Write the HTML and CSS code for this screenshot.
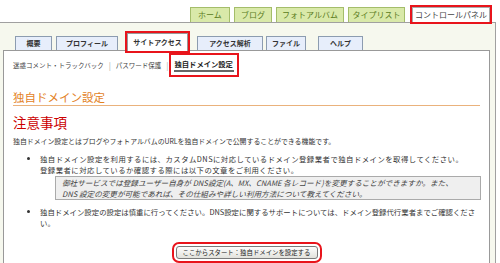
FILE: index.html
```html
<!DOCTYPE html>
<html lang="ja">
<head>
    <meta charset="UTF-8">
    <title>独自ドメイン設定</title>
    <link rel="stylesheet" href="styles.css">
</head>
<body>

<div class="frame">
    <ul class="gnav">
        <li class="gtab g-home">ホーム</li>
        <li class="gtab g-blog">ブログ</li>
        <li class="gtab g-photo">フォトアルバム</li>
        <li class="gtab g-type">タイプリスト</li>
        <li class="gtab g-panel current">コントロールパネル</li>
    </ul>

    <div class="panel">
        <ul class="tabs">
            <li class="tab t-summary">概要</li>
            <li class="tab t-profile">プロフィール</li>
            <li class="tab t-site current">サイトアクセス</li>
            <li class="tab t-stats">アクセス解析</li>
            <li class="tab t-file">ファイル</li>
            <li class="tab t-help">ヘルプ</li>
        </ul>

        <div class="content">
            <div class="subnav">
                <span class="sublink">迷惑コメント・トラックバック</span>
                <span class="sep">|</span>
                <span class="sublink">パスワード保護</span>
                <span class="sep">|</span>
                <span class="sublink current">独自ドメイン設定</span>
            </div>

            <h1 class="title">独自ドメイン設定</h1>
            <h2 class="notice">注意事項</h2>
            <p class="intro">独自ドメイン設定とはブログやフォトアルバムのURLを独自ドメインで公開することができる機能です。</p>

            <ul class="points">
                <li class="wide">独自ドメイン設定を利用するには、カスタムDNSに対応しているドメイン登録業者で独自ドメインを取得してください。<br>登録業者に対応しているか確認する際には以下の文章をご利用ください。
                    <div class="quote">御社サービスでは登録ユーザー自身が DNS設定(A、MX、CNAME 各レコード)を変更することができますか。また、<br>DNS 設定の変更が可能であれば、その仕組みや詳しい利用方法について教えてください。</div>
                </li>
                <li>独自ドメイン設定の設定は慎重に行ってください。DNS設定に関するサポートについては、ドメイン登録代行業者までご確認ください。</li>
            </ul>

            <div class="actions">
                <button class="start" type="button">ここからスタート：独自ドメインを設定する</button>
            </div>
            <hr class="rule">
        </div>
    </div>
</div>

</body>
</html>
```

FILE: styles.css
```css
body {
    margin: 0;
    font-family: "Noto Sans CJK JP", sans-serif;
    color: #333;
    background-color: #fff;
}
.frame {
    width: 496px;
}

/* global tabs */
.gnav {
    list-style: none;
    margin: 0;
    padding: 7px 6px 0 0;
    display: flex;
    justify-content: flex-end;
    gap: 4px;
}
.gtab {
    box-sizing: border-box;
    height: 15px;
    border: 1px solid #a4bd6a;
    border-bottom: none;
    background-color: #d9e9a9;
    color: #5a7b1c;
    font-size: 8px;
    line-height: 14px;
    text-align: center;
}
.g-home { width: 40px; }
.g-blog { width: 38px; }
.g-photo { width: 68px; }
.g-type { width: 57px; }
.g-panel { width: 78px; margin-left: 3px; }
.gtab.current {
    background-color: #fff;
    border-color: #aaa;
    color: #444;
    outline: 2px solid #e8141b;
    outline-offset: 0;
}

/* panel */
.panel {
    background-color: #f6f8ee;
    border-top: 1px solid #a0a0a0;
    border-right: 1px solid #a0a0a0;
    padding: 10px 5px 0 3px;
}
.tabs {
    list-style: none;
    margin: 0;
    padding: 0;
    display: flex;
    align-items: flex-end;
    height: 17px;
}
.tab {
    box-sizing: border-box;
    height: 14px;
    border: 1px solid #8c9cb0;
    border-bottom: none;
    background-color: #e7eefb;
    font-size: 7px;
    font-weight: bold;
    line-height: 13px;
    text-align: center;
    color: #333;
}
.t-summary { width: 37px; margin-left: 12px; }
.t-profile { width: 62px; margin-left: 4px; }
.t-site { width: 61px; margin-left: 9px; }
.t-stats { width: 66px; margin-left: 9px; }
.t-file { width: 40px; margin-left: 3px; }
.t-help { width: 45px; margin-left: 12px; }
.tab.current {
    position: relative;
    height: 18px;
    margin-bottom: -1px;
    line-height: 17px;
    background-color: #fff;
    border-color: #999;
    outline: 2px solid #e8141b;
    outline-offset: 0;
}

.content {
    background-color: #fff;
    border: 1px solid #999;
    padding: 0 9px 30px 9px;
}

/* sub navigation */
.subnav {
    display: flex;
    align-items: center;
    height: 14px;
    margin-top: 7px;
    font-size: 6.5px;
    color: #444;
}
.sublink {
    line-height: 12px;
}
.sep {
    margin: 0 5px;
    color: #aaa;
    font-size: 8px;
}
.sublink.current {
    font-weight: bold;
    font-size: 7.3px;
    color: #222;
    padding: 0 1px;
    border-bottom: 2px solid #666;
    outline: 2px solid #e8141b;
    outline-offset: 3px;
}

.title {
    margin: 18px 0 0;
    padding-bottom: 1px;
    border-bottom: 1px solid #eab27c;
    font-size: 11.5px;
    font-weight: normal;
    line-height: 14px;
    color: #e3821f;
}
.notice {
    margin: 8px 0 0;
    font-size: 13.5px;
    font-weight: normal;
    line-height: 16px;
    color: #cc0000;
}
.intro {
    margin: 6px 0 0;
    font-size: 6.9px;
    line-height: 10px;
}
.points {
    margin: 7px 0 0;
    padding-left: 27px;
    font-size: 7.4px;
    line-height: 11px;
}
.points li + li {
    margin-top: 6px;
}
.points .wide {
    letter-spacing: 0.45px;
}
.quote {
    width: 412px;
    margin: 1px 0 0 15px;
    padding: 0 6px;
    background-color: #efefef;
    border: 1px solid #aaa;
    font-style: italic;
    font-size: 7.6px;
    letter-spacing: 0;
    color: #444;
}

.actions {
    margin-top: 8px;
    text-align: center;
}
.start {
    width: 142px;
    height: 13px;
    padding: 0;
    border: 1px solid #7a7a7a;
    border-radius: 3px;
    background: linear-gradient(#fdfdfd, #e2e2dc);
    font-family: "Noto Sans CJK JP", sans-serif;
    font-size: 6.4px;
    line-height: 11px;
    color: #222;
    outline: 2px solid #e8141b;
    outline-offset: 2px;
}
.rule {
    margin: 8px 0 0;
    border: none;
    border-top: 1px solid #cdd1dc;
}
```
